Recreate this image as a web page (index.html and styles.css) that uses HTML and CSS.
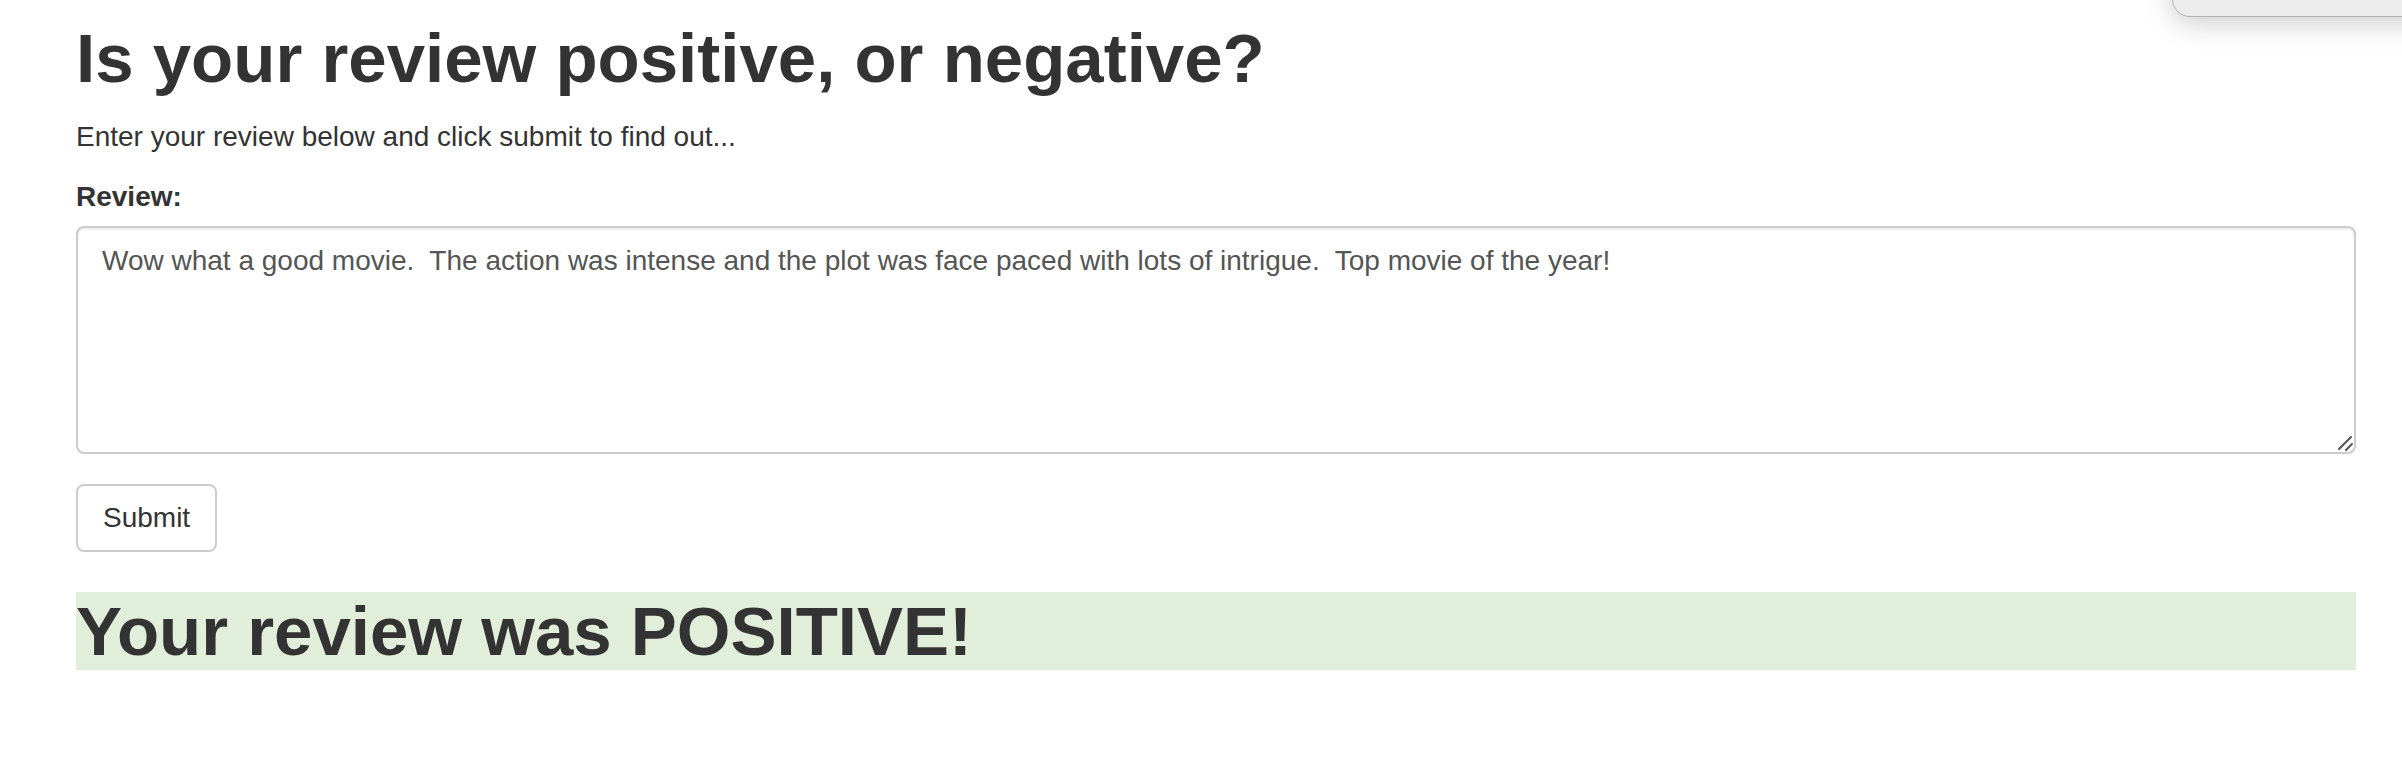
FILE: index.html
```
<!DOCTYPE html>
<html lang="en">
<head>
<meta charset="utf-8">
<meta name="viewport" content="width=device-width, initial-scale=1">
<title>Review sentiment</title>
<link rel="stylesheet" href="styles.css">
</head>
<body>
<aside class="floating-panel" aria-hidden="true"></aside>
<main class="page">
<h1 class="heading">Is your review positive, or negative?</h1>
<p class="intro">Enter your review below and click submit to find out...</p>
<form class="review-form">
<label class="review-label" for="review">Review:</label>
<div class="review-field">
<textarea class="review-input" id="review" name="review" spellcheck="false">Wow what a good movie.  The action was intense and the plot was face paced with lots of intrigue.  Top movie of the year!</textarea>
<svg class="grip" viewBox="0 0 16 16" aria-hidden="true"><path d="M2 14 14 2M9 15l6-6"/></svg>
</div>
<button class="submit" type="button">Submit</button>
</form>
<h1 class="heading result">Your review was POSITIVE!</h1>
</main>
</body>
</html>
```
FILE: styles.css
```
* {
  box-sizing: border-box;
}

body {
  margin: 0;
  background: #fff;
  color: #333;
  font-family: "Helvetica Neue", "Liberation Sans", Arial, sans-serif;
  font-size: 28px;
  line-height: 40px;
  overflow-x: hidden;
}

.page {
  padding: 20px 46px 40px 76px;
}

.heading {
  margin: 0 0 19px;
  font-size: 69px;
  font-weight: 700;
  line-height: 78px;
}

.intro {
  margin: 0 0 20px;
}

.review-form {
  display: flex;
  flex-direction: column;
  align-items: flex-start;
}

.review-label {
  margin-bottom: 9px;
  font-weight: 700;
}

.review-field {
  position: relative;
  width: 100%;
  margin-bottom: 30px;
}

.review-input {
  display: block;
  width: 100%;
  height: 228px;
  padding: 13px 24px;
  border: 2px solid #ccc;
  border-radius: 8px;
  box-shadow: inset 0 2px 2px rgba(0, 0, 0, 0.075);
  background: #fff;
  color: #555;
  font: inherit;
  resize: none;
}

.grip {
  position: absolute;
  right: 3px;
  bottom: 3px;
  width: 16px;
  height: 16px;
  fill: none;
  stroke: #555;
  stroke-width: 2;
  stroke-linecap: round;
  pointer-events: none;
}

.submit {
  padding: 12px 25px;
  border: 2px solid #ccc;
  border-radius: 8px;
  background: #fff;
  color: #333;
  font: inherit;
  cursor: pointer;
}

.result {
  margin: 40px 0 0;
  padding-top: 2px;
  line-height: 76px;
  background: #e1eeda;
}

.floating-panel {
  position: absolute;
  top: -40px;
  right: -40px;
  width: 270px;
  height: 57px;
  border: 1px solid #b4b4b4;
  border-radius: 18px;
  background: #ececec;
  box-shadow: 0 6px 28px rgba(0, 0, 0, 0.2);
}
```
